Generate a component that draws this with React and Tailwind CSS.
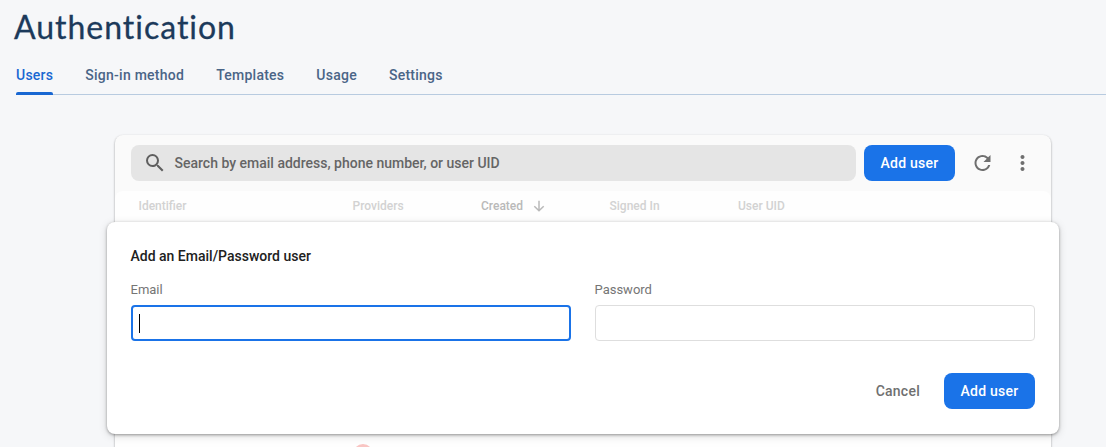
import React from 'react';

const tabs = ['Users', 'Sign-in method', 'Templates', 'Usage', 'Settings'];

function SearchIcon() {
  return (
    <svg viewBox="0 0 24 24" className="size-6 shrink-0 fill-[#5f5f5f]">
      <path d="M15.5 14h-.79l-.28-.27A6.471 6.471 0 0 0 16 9.5 6.5 6.5 0 1 0 9.5 16c1.61 0 3.09-.59 4.23-1.57l.27.28v.79l5 4.99L20.49 19l-4.99-5zm-6 0C7.01 14 5 11.99 5 9.5S7.01 5 9.5 5 14 7.01 14 9.5 11.99 14 9.5 14z" />
    </svg>
  );
}

function RefreshIcon() {
  return (
    <svg viewBox="0.5 0 24 24" className="size-6 fill-[#6f6f6f]">
      <path d="M17.65 6.35A7.958 7.958 0 0 0 12 4c-4.42 0-7.99 3.58-7.99 8s3.57 8 7.99 8c3.73 0 6.84-2.55 7.73-6h-2.08A5.99 5.99 0 0 1 12 18c-3.31 0-6-2.69-6-6s2.69-6 6-6c1.66 0 3.14.69 4.22 1.78L13 11h7V4l-2.35 2.35z" />
    </svg>
  );
}

function MoreIcon() {
  return (
    <svg viewBox="0.5 0 24 24" className="size-6 fill-[#6f6f6f]">
      <path d="M12 8c1.1 0 2-.9 2-2s-.9-2-2-2-2 .9-2 2 .9 2 2 2zm0 2c-1.1 0-2 .9-2 2s.9 2 2 2 2-.9 2-2-.9-2-2-2zm0 6c-1.1 0-2 .9-2 2s.9 2 2 2 2-.9 2-2-.9-2-2-2z" />
    </svg>
  );
}

function ArrowDownIcon() {
  return (
    <svg viewBox="0 0 12 12" className="ml-2.5 size-3 fill-none stroke-[#b9b9b9] stroke-[1.5]">
      <path d="M6 .7v10M1.3 6.2 6 10.8l4.7-4.6" />
    </svg>
  );
}

function PrimaryButton({ children }) {
  return (
    <button className="h-9 w-[91px] rounded-lg bg-[#1a73e8] text-sm font-medium tracking-[0.25px] text-white">
      {children}
    </button>
  );
}

export default function App() {
  return (
    <div className="h-[447px] overflow-hidden bg-[#f6f7f9] font-['Roboto',sans-serif]">
      <h1 className="h-[55px] pl-[14px] pt-[5px] font-['Lato',sans-serif] text-[32px] leading-[44px] tracking-[0.98px] text-[#1c3a5b] [-webkit-text-stroke:0.3px_#1c3a5b]">
        Authentication
      </h1>
      <nav className="ml-4 flex h-10 gap-8 border-b border-[#b8cbe0] text-sm font-medium tracking-[0.25px] text-[#4a6587]">
        {tabs.map((tab, i) => (
          <a key={tab} className={i === 0 ? 'relative pt-[10px] text-[#1967d2]' : 'pt-[10px]'}>
            {tab}
            {i === 0 && <span className="absolute inset-x-0 -bottom-px h-[3px] rounded-t-[2px] bg-[#1967d2]" />}
          </a>
        ))}
      </nav>
      <main className="ml-[115px] mt-10 h-[340px] w-[936px] rounded-lg bg-[#fafafa] shadow-[0_1px_2px_rgba(0,0,0,0.3),0_1px_3px_rgba(0,0,0,0.12)]">
        <div className="flex h-14 items-center pl-4">
          <div className="flex h-9 w-[725px] items-center rounded-lg bg-[#e5e5e5] pl-[11.5px] text-sm font-medium text-[#656565]">
            <SearchIcon />
            <span className="ml-2">Search by email address, phone number, or user UID</span>
          </div>
          <div className="ml-2 flex">
            <PrimaryButton>Add user</PrimaryButton>
          </div>
          <button className="ml-4"><RefreshIcon /></button>
          <button className="ml-4"><MoreIcon /></button>
        </div>
        <div className="h-[284px] rounded-t-lg bg-[#fefefe]">
          <div className="grid h-[31px] grid-cols-[214px_128.5px_128.5px_128.5px_1fr] items-center pb-px pl-[23.5px] text-xs font-medium text-[#d2d2d2]">
            <span>Identifier</span>
            <span>Providers</span>
            <span className="flex items-center text-[#b9b9b9]">Created<ArrowDownIcon /></span>
            <span>Signed In</span>
            <span>User UID</span>
          </div>
          <section className="relative -mx-2 flex h-[212px] flex-col rounded-lg bg-white px-6 pt-6 shadow-[0_1px_3px_rgba(0,0,0,0.35),0_2px_8px_rgba(0,0,0,0.15)]">
            <h2 className="-ml-[0.5px] text-sm leading-5 font-medium text-[#212121]">Add an Email/Password user</h2>
            <div className="mt-4 grid grid-cols-2 gap-6">
              <label className="text-[13px] leading-4 text-[#757575]">
                <span className="-ml-[0.5px]">Email</span>
                <span className="mt-[7px] flex h-9 items-center rounded border-2 border-[#1a73e8] pl-1.5">
                  <span className="h-[19px] w-px bg-black" />
                </span>
              </label>
              <label className="text-[13px] leading-4 text-[#757575]">
                <span className="-ml-[0.5px]">Password</span>
                <span className="mt-[7px] block h-9 rounded border border-[#dedede]" />
              </label>
            </div>
            <div className="mt-8 flex justify-end gap-6">
              <button className="text-sm font-medium tracking-[0.25px] text-[#707070]">Cancel</button>
              <PrimaryButton>Add user</PrimaryButton>
            </div>
          </section>
          <div className="ml-[238px] mt-[10px] size-5 rounded-full bg-[#f9c5c3]" />
        </div>
      </main>
    </div>
  );
}
